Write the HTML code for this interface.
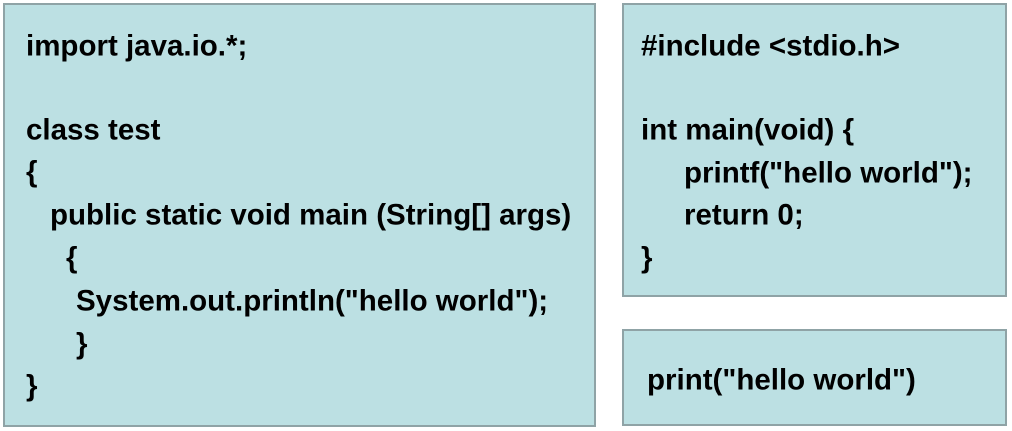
<!DOCTYPE html>
<html><head><style>
body{margin:0;width:1012px;height:431px;background:#fff;position:relative;overflow:hidden;font-family:"Liberation Sans",Arial,sans-serif;font-weight:bold;font-size:29.5px;color:#000}
.b{position:absolute;background:#bce0e3;border:2px solid #8fa3a6;box-sizing:border-box}
.t{position:absolute;white-space:pre;line-height:1;transform:translateY(-50%)}
</style></head><body>
<div class="b" style="left:3px;top:3px;width:593px;height:424px"></div>
<div class="b" style="left:622px;top:3px;width:385px;height:294px"></div>
<div class="b" style="left:622px;top:329px;width:385px;height:97px"></div>
<div class="t" style="left:26px;top:46px">import java.io.*;</div>
<div class="t" style="left:26px;top:130px">class test</div>
<div class="t" style="left:26px;top:172px">{</div>
<div class="t" style="left:50px;top:215px">public static void main (String[] args)</div>
<div class="t" style="left:66px;top:258px">{</div>
<div class="t" style="left:76px;top:301px">System.out.println("hello world");</div>
<div class="t" style="left:76px;top:344px">}</div>
<div class="t" style="left:26px;top:386px">}</div>
<div class="t" style="left:641px;top:46px">#include &lt;stdio.h&gt;</div>
<div class="t" style="left:641px;top:130px">int main(void) {</div>
<div class="t" style="left:684px;top:173px">printf("hello world");</div>
<div class="t" style="left:684px;top:215px">return 0;</div>
<div class="t" style="left:641px;top:258px">}</div>
<div class="t" style="left:647px;top:380px">print("hello world")</div>
</body></html>
